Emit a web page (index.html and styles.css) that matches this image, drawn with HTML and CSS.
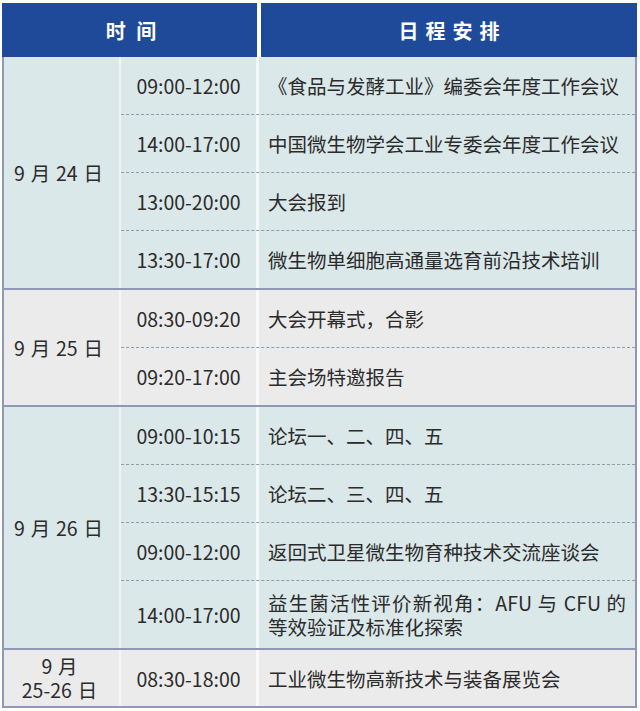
FILE: index.html
```html
<!DOCTYPE html>
<html lang="zh">
<head>
<meta charset="utf-8">
<link rel="stylesheet" href="styles.css">
</head>
<body>
<div class="sheet">
  <div class="head">
    <div class="head-cell head-time">时 间</div>
    <div class="head-cell head-plan">日程安排</div>
  </div>
  <div class="body">
    <div class="group blue">
      <div class="date">9 月 24 日</div>
      <div class="slots">
        <div class="slot"><div class="time">09:00-12:00</div><div class="desc">《食品与发酵工业》编委会年度工作会议</div></div>
        <div class="slot"><div class="time">14:00-17:00</div><div class="desc">中国微生物学会工业专委会年度工作会议</div></div>
        <div class="slot"><div class="time">13:00-20:00</div><div class="desc">大会报到</div></div>
        <div class="slot"><div class="time">13:30-17:00</div><div class="desc">微生物单细胞高通量选育前沿技术培训</div></div>
      </div>
    </div>
    <div class="group gray">
      <div class="date">9 月 25 日</div>
      <div class="slots">
        <div class="slot"><div class="time">08:30-09:20</div><div class="desc">大会开幕式，合影</div></div>
        <div class="slot"><div class="time">09:20-17:00</div><div class="desc">主会场特邀报告</div></div>
      </div>
    </div>
    <div class="group blue">
      <div class="date">9 月 26 日</div>
      <div class="slots">
        <div class="slot"><div class="time">09:00-10:15</div><div class="desc">论坛一、二、四、五</div></div>
        <div class="slot"><div class="time">13:30-15:15</div><div class="desc">论坛二、三、四、五</div></div>
        <div class="slot"><div class="time">09:00-12:00</div><div class="desc">返回式卫星微生物育种技术交流座谈会</div></div>
        <div class="slot tall"><div class="time">14:00-17:00</div><div class="desc"><p class="wrap">益生菌活性评价新视角：AFU 与 CFU 的等效验证及标准化探索</p></div></div>
      </div>
    </div>
    <div class="group gray">
      <div class="date"><p class="date-two">9 月<br>25-26 日</p></div>
      <div class="slots">
        <div class="slot last"><div class="time">08:30-18:00</div><div class="desc">工业微生物高新技术与装备展览会</div></div>
      </div>
    </div>
  </div>
</div>
</body>
</html>
```

FILE: styles.css
```css
* { box-sizing: border-box; }
html, body { margin: 0; padding: 0; background: #ffffff; }
body {
  font-family: "Noto Sans CJK SC", "Noto Sans", sans-serif;
  color: #2b2b2b;
  font-size: 19.5px;
}
.sheet {
  margin: 3px 0 0 2px;
  width: 635px;
}
.head {
  display: flex;
  gap: 4px;
  height: 54px;
}
.head-cell {
  background: #1f4a9a;
  color: #ffffff;
  font-weight: 700;
  font-size: 20px;
  display: flex;
  align-items: center;
  justify-content: center;
}
.head-time { width: 255px; letter-spacing: 3px; padding-left: 6px; }
.head-plan { flex: 1; letter-spacing: 7px; padding-left: 7px; }
.body {
  border-left: 2px solid #8d99b5;
  border-right: 2px solid #8d99b5;
  border-bottom: 2px solid #8d99b5;
}
.group { display: flex; }
.group + .group { border-top: 2px solid #8d99b5; }
.blue { background: #dbe8e9; }
.gray { background: #ebebeb; }
.date {
  width: 117px;
  flex: none;
  display: flex;
  align-items: center;
  justify-content: center;
  padding-right: 6px;
  word-spacing: 1.5px;
  border-right: 2px solid rgba(255, 255, 255, 0.55);
  white-space: pre;
}
.date-two {
  margin: 0;
  text-align: center;
  line-height: 24px;
  padding-left: 2px;
}
.slots { flex: 1; display: flex; flex-direction: column; }
.slot { display: flex; height: 57px; }
.slot + .slot { border-top: 1px dashed #8e9ca8; height: 58px; }
.slot.tall { height: 68px; }
.slot.last { height: 56px; }
.time {
  width: 138px;
  flex: none;
  display: flex;
  align-items: center;
  justify-content: center;
  border-right: 3px solid rgba(255, 255, 255, 0.7);
}
.desc {
  flex: 1;
  display: flex;
  align-items: center;
  padding: 0 9px 0 9px;
}
.wrap {
  margin: 0;
  line-height: 24px;
  text-align: justify;
}
```
